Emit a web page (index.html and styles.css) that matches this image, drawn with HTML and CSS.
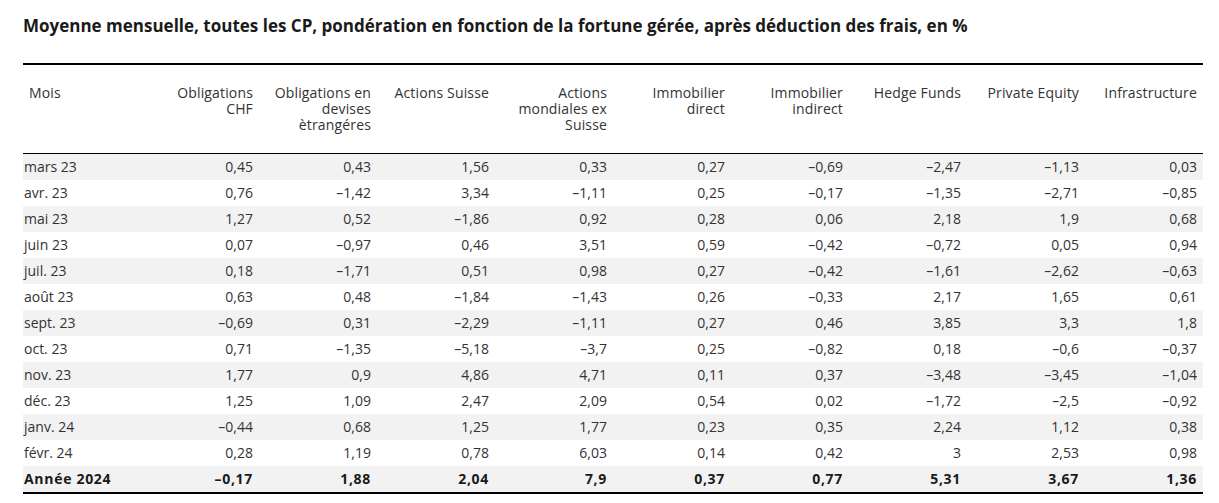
FILE: index.html
```html
<!DOCTYPE html>
<html lang="fr">
<head>
<meta charset="utf-8">
<title>Moyenne mensuelle</title>
<link rel="stylesheet" href="styles.css">
</head>
<body>
<div class="wrap">
  <h2 class="title">Moyenne mensuelle, toutes les CP, pondération en fonction de la fortune gérée, après déduction des frais, en %</h2>
  <table class="perf">
    <thead>
      <tr>
        <th class="first">Mois</th>
        <th>Obligations CHF</th>
        <th>Obligations en devises ètrangéres</th>
        <th>Actions Suisse</th>
        <th>Actions mondiales ex Suisse</th>
        <th>Immobilier direct</th>
        <th>Immobilier indirect</th>
        <th>Hedge Funds</th>
        <th>Private Equity</th>
        <th>Infrastructure</th>
      </tr>
    </thead>
    <tbody>
      <tr><td class="first">mars 23</td><td>0,45</td><td>0,43</td><td>1,56</td><td>0,33</td><td>0,27</td><td>–0,69</td><td>–2,47</td><td>–1,13</td><td>0,03</td></tr>
      <tr><td class="first">avr. 23</td><td>0,76</td><td>–1,42</td><td>3,34</td><td>–1,11</td><td>0,25</td><td>–0,17</td><td>–1,35</td><td>–2,71</td><td>–0,85</td></tr>
      <tr><td class="first">mai 23</td><td>1,27</td><td>0,52</td><td>–1,86</td><td>0,92</td><td>0,28</td><td>0,06</td><td>2,18</td><td>1,9</td><td>0,68</td></tr>
      <tr><td class="first">juin 23</td><td>0,07</td><td>–0,97</td><td>0,46</td><td>3,51</td><td>0,59</td><td>–0,42</td><td>–0,72</td><td>0,05</td><td>0,94</td></tr>
      <tr><td class="first">juil. 23</td><td>0,18</td><td>–1,71</td><td>0,51</td><td>0,98</td><td>0,27</td><td>–0,42</td><td>–1,61</td><td>–2,62</td><td>–0,63</td></tr>
      <tr><td class="first">août 23</td><td>0,63</td><td>0,48</td><td>–1,84</td><td>–1,43</td><td>0,26</td><td>–0,33</td><td>2,17</td><td>1,65</td><td>0,61</td></tr>
      <tr><td class="first">sept. 23</td><td>–0,69</td><td>0,31</td><td>–2,29</td><td>–1,11</td><td>0,27</td><td>0,46</td><td>3,85</td><td>3,3</td><td>1,8</td></tr>
      <tr><td class="first">oct. 23</td><td>0,71</td><td>–1,35</td><td>–5,18</td><td>–3,7</td><td>0,25</td><td>–0,82</td><td>0,18</td><td>–0,6</td><td>–0,37</td></tr>
      <tr><td class="first">nov. 23</td><td>1,77</td><td>0,9</td><td>4,86</td><td>4,71</td><td>0,11</td><td>0,37</td><td>–3,48</td><td>–3,45</td><td>–1,04</td></tr>
      <tr><td class="first">déc. 23</td><td>1,25</td><td>1,09</td><td>2,47</td><td>2,09</td><td>0,54</td><td>0,02</td><td>–1,72</td><td>–2,5</td><td>–0,92</td></tr>
      <tr><td class="first">janv. 24</td><td>–0,44</td><td>0,68</td><td>1,25</td><td>1,77</td><td>0,23</td><td>0,35</td><td>2,24</td><td>1,12</td><td>0,38</td></tr>
      <tr><td class="first">févr. 24</td><td>0,28</td><td>1,19</td><td>0,78</td><td>6,03</td><td>0,14</td><td>0,42</td><td>3</td><td>2,53</td><td>0,98</td></tr>
      <tr class="total"><td class="first">Année 2024</td><td>–0,17</td><td>1,88</td><td>2,04</td><td>7,9</td><td>0,37</td><td>0,77</td><td>5,31</td><td>3,67</td><td>1,36</td></tr>
    </tbody>
  </table>
</div>
</body>
</html>
```

FILE: styles.css
```css
html, body {
  margin: 0;
  padding: 0;
  background: #ffffff;
}
body {
  font-family: "Open Sans", "Noto Sans", "Liberation Sans", sans-serif;
  color: #333333;
}
.wrap {
  padding: 14px 16px 0 23px;
}
.title {
  margin: 0;
  font-size: 17px;
  line-height: 24px;
  font-weight: 700;
  color: #1a1a1a;
}
.perf {
  margin-top: 25px;
  width: 1180px;
  border-collapse: collapse;
  table-layout: fixed;
  font-size: 14px;
}
.perf thead tr {
  border-top: 2px solid #000;
  border-bottom: 1px solid #000;
}
.perf th {
  font-weight: 400;
  text-align: right;
  vertical-align: top;
  padding: 20px 6px 20px 12px;
  line-height: 16px;
  color: #333333;
  letter-spacing: 0.15px;
}
.perf th.first {
  text-align: left;
  padding-left: 6px;
}
.perf td {
  text-align: right;
  height: 26px;
  padding: 0 6px 0 6px;
  line-height: 26px;
  box-sizing: border-box;
}
.perf td.first {
  text-align: left;
  padding-left: 1px;
}
.perf tbody tr:nth-child(odd) {
  background: #f2f2f2;
}
.perf tr.total {
  font-weight: 700;
  color: #1a1a1a;
  letter-spacing: 0.7px;
  border-bottom: 2px solid #000;
}
```
